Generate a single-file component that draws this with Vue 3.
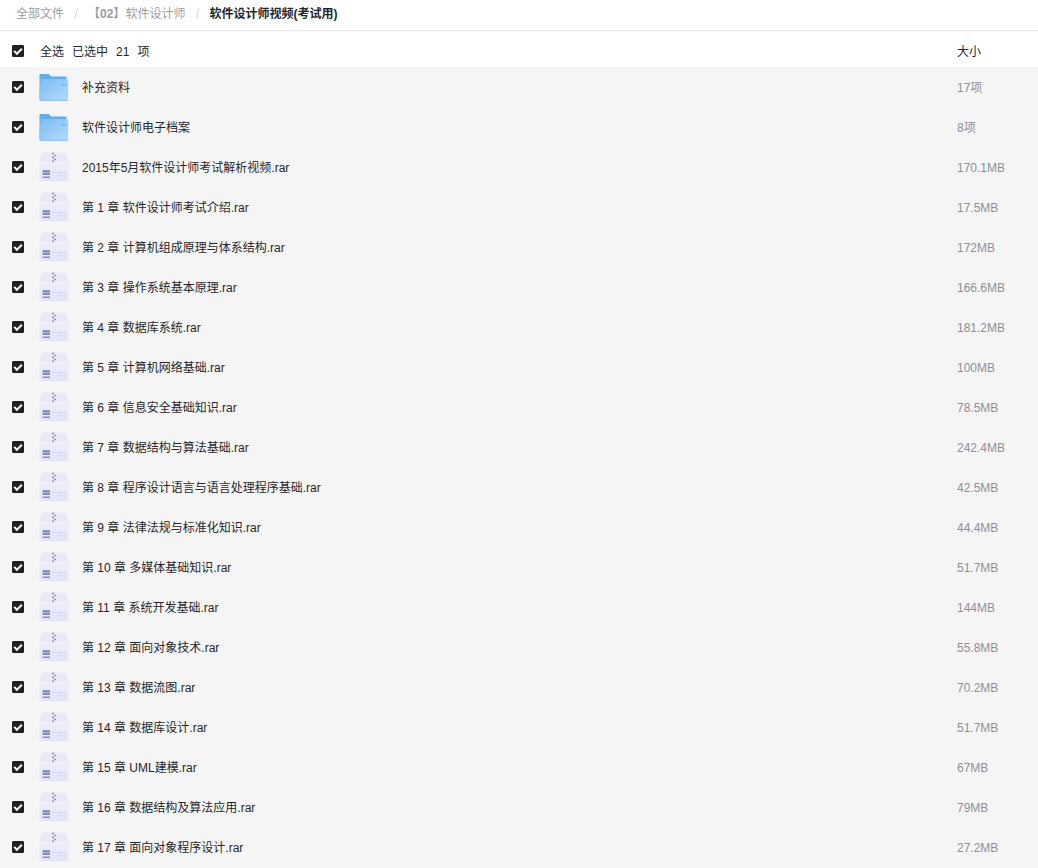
<script setup>
import { computed, ref } from 'vue'

const files = ref(
  [
    ['补充资料', '17项', 'folder'],
    ['软件设计师电子档案', '8项', 'folder'],
    ['2015年5月软件设计师考试解析视频.rar', '170.1MB'],
    ['第 1 章 软件设计师考试介绍.rar', '17.5MB'],
    ['第 2 章 计算机组成原理与体系结构.rar', '172MB'],
    ['第 3 章 操作系统基本原理.rar', '166.6MB'],
    ['第 4 章 数据库系统.rar', '181.2MB'],
    ['第 5 章 计算机网络基础.rar', '100MB'],
    ['第 6 章 信息安全基础知识.rar', '78.5MB'],
    ['第 7 章 数据结构与算法基础.rar', '242.4MB'],
    ['第 8 章 程序设计语言与语言处理程序基础.rar', '42.5MB'],
    ['第 9 章 法律法规与标准化知识.rar', '44.4MB'],
    ['第 10 章 多媒体基础知识.rar', '51.7MB'],
    ['第 11 章 系统开发基础.rar', '144MB'],
    ['第 12 章 面向对象技术.rar', '55.8MB'],
    ['第 13 章 数据流图.rar', '70.2MB'],
    ['第 14 章 数据库设计.rar', '51.7MB'],
    ['第 15 章 UML建模.rar', '67MB'],
    ['第 16 章 数据结构及算法应用.rar', '79MB'],
    ['第 17 章 面向对象程序设计.rar', '27.2MB'],
  ].map(([name, size, kind = 'archive']) => ({ name, size, kind, checked: true }))
)

const total = ref(21)
const selected = computed(() => total.value - files.value.filter((f) => !f.checked).length)
const allChecked = computed({
  get: () => files.value.every((f) => f.checked),
  set: (value) => files.value.forEach((f) => (f.checked = value)),
})
</script>

<template>
  <div class="page">
    <nav class="crumbs">
      <a href="#all">全部文件</a>
      <span class="sep">/</span>
      <a href="#parent"><b>【02】</b>软件设计师</a>
      <span class="sep">/</span>
      <a href="#current" class="current">软件设计师视频(考试用)</a>
    </nav>

    <svg class="defs" aria-hidden="true">
      <defs>
        <linearGradient id="folderFront" x1="0" y1="0" x2="1" y2="1">
          <stop offset="0" stop-color="#7cbcf2" />
          <stop offset="1" stop-color="#b4dafc" />
        </linearGradient>
        <linearGradient id="boxFront" x1="0" y1="0" x2="0" y2="1">
          <stop offset="0" stop-color="#eeeffa" />
          <stop offset="1" stop-color="#e2e5f8" />
        </linearGradient>
      </defs>
    </svg>

    <table class="files">
      <thead>
        <tr>
          <th class="check"><input id="all" v-model="allChecked" type="checkbox" /></th>
          <th class="name">
            <div class="summary">
              <label for="all">全选</label>
              <span>已选中</span>
              <span>{{ selected }}</span>
              <span>项</span>
            </div>
          </th>
          <th class="size">大小</th>
        </tr>
      </thead>
      <tbody>
        <tr v-for="(file, i) in files" :key="file.name">
          <td class="check"><input :id="'file' + i" v-model="file.checked" type="checkbox" /></td>
          <td class="name">
            <label class="entry" :for="'file' + i">
              <svg v-if="file.kind === 'folder'" viewBox="0 0 30 30" aria-hidden="true">
                <path d="M.5 4V3q0-1 1-1H10l2 2.500H26.500q1 0 1 1V27H1.500q-1 0-1-1Z" fill="#62aeeb" />
                <path d="M1.500 8q0-1 1-1H28q1.200 0 1.200 1V27.500q0 1.200-1.200 1.200H1.800q-1.300 0-1.300-1.200Z" fill="url(#folderFront)" />
                <path d="M1 28.400H28.600" stroke="#8cc3f3" />
                <path d="M22 12.800H26.500" stroke="#74b6ee" stroke-width="1.800" />
              </svg>
              <svg v-else viewBox="0 0 30 30" aria-hidden="true">
                <path d="M4 .5H25.500q1.300 0 1.700 1L29.500 10H.5L2.500 1.500Q2.800 .5 4 .5Z" fill="#e8eaf6" />
                <path d="M.5 10H29.500V27.500q0 1.500-1.500 1.500H2Q.5 29 .5 27.500Z" fill="url(#boxFront)" />
                <path d="M1 10H29" stroke="#f4f5fc" stroke-width=".6" />
                <path d="M13 1.500H15M15 3.500H17M13 5.500H15M15 7.500H17M13 9.200H15" stroke="#8c93ba" stroke-width="1.400" />
                <path d="M3.500 18H11V20H3.500ZM3.500 21H11V23H3.500ZM3.500 24.500H11V26H3.500Z" fill="#888fb8" />
                <path d="M3.500 20.500H11" stroke="#adb2d1" />
                <path d="M13 20.700H27M19 23.700H25" stroke="#d9dbee" stroke-width="1.200" />
              </svg>
              <span class="title">{{ file.name }}</span>
            </label>
          </td>
          <td class="size"><span>{{ file.size }}</span></td>
        </tr>
      </tbody>
    </table>
  </div>
</template>

<style>
body {
  margin: 0;
  background: #f5f5f5;
}
</style>

<style scoped>
.page {
  font: 12px/20px "Liberation Sans", "Noto Sans CJK SC", sans-serif;
  color: #25262b;
}
.crumbs {
  display: flex;
  align-items: center;
  height: 28px;
  padding: 0 16px 2px;
  background: #fff;
  border-bottom: 1px solid #e7e7e8;
}
.crumbs a {
  color: #9b9ca2;
  text-decoration: none;
}
.crumbs .current {
  color: #25262b;
  font-weight: 700;
}
.sep {
  width: 24px;
  font-size: 14px;
  text-align: center;
  color: #dcdce0;
}
.defs {
  display: block;
  width: 0;
  height: 0;
}
.files {
  width: 100%;
  border-collapse: collapse;
  table-layout: fixed;
}
.files th,
.files td {
  padding: 0;
  text-align: left;
  font-weight: 400;
  vertical-align: middle;
}
thead tr {
  height: 36px;
  background: #fff;
}
.files thead th {
  padding-top: 5px;
}
.files thead .check {
  padding-top: 4px;
}
tbody tr {
  height: 40px;
  background: #f5f5f5;
}
.files .check {
  width: 39px;
}
.files .size {
  width: 81px;
}
.files tbody .size {
  padding-top: 2px;
  color: #8f9097;
}
.check input {
  appearance: none;
  display: block;
  width: 12px;
  height: 12px;
  margin: 0 0 0 12px;
  border: 1px solid #202127;
  border-radius: 1px;
  background: #fff;
}
.check input:checked {
  background: #202127;
}
.check input:checked::before {
  content: "";
  display: block;
  box-sizing: border-box;
  width: 8px;
  height: 5px;
  margin: 2px 0 0 1px;
  border: solid #fff;
  border-width: 0 0 2px 2px;
  transform: rotate(-45deg);
}
.summary {
  display: flex;
  gap: 8px;
  padding-left: 1px;
}
.entry {
  display: flex;
  align-items: center;
  gap: 13px;
}
.entry svg {
  width: 30px;
  height: 30px;
}
.title {
  padding-top: 2px;
}
</style>
